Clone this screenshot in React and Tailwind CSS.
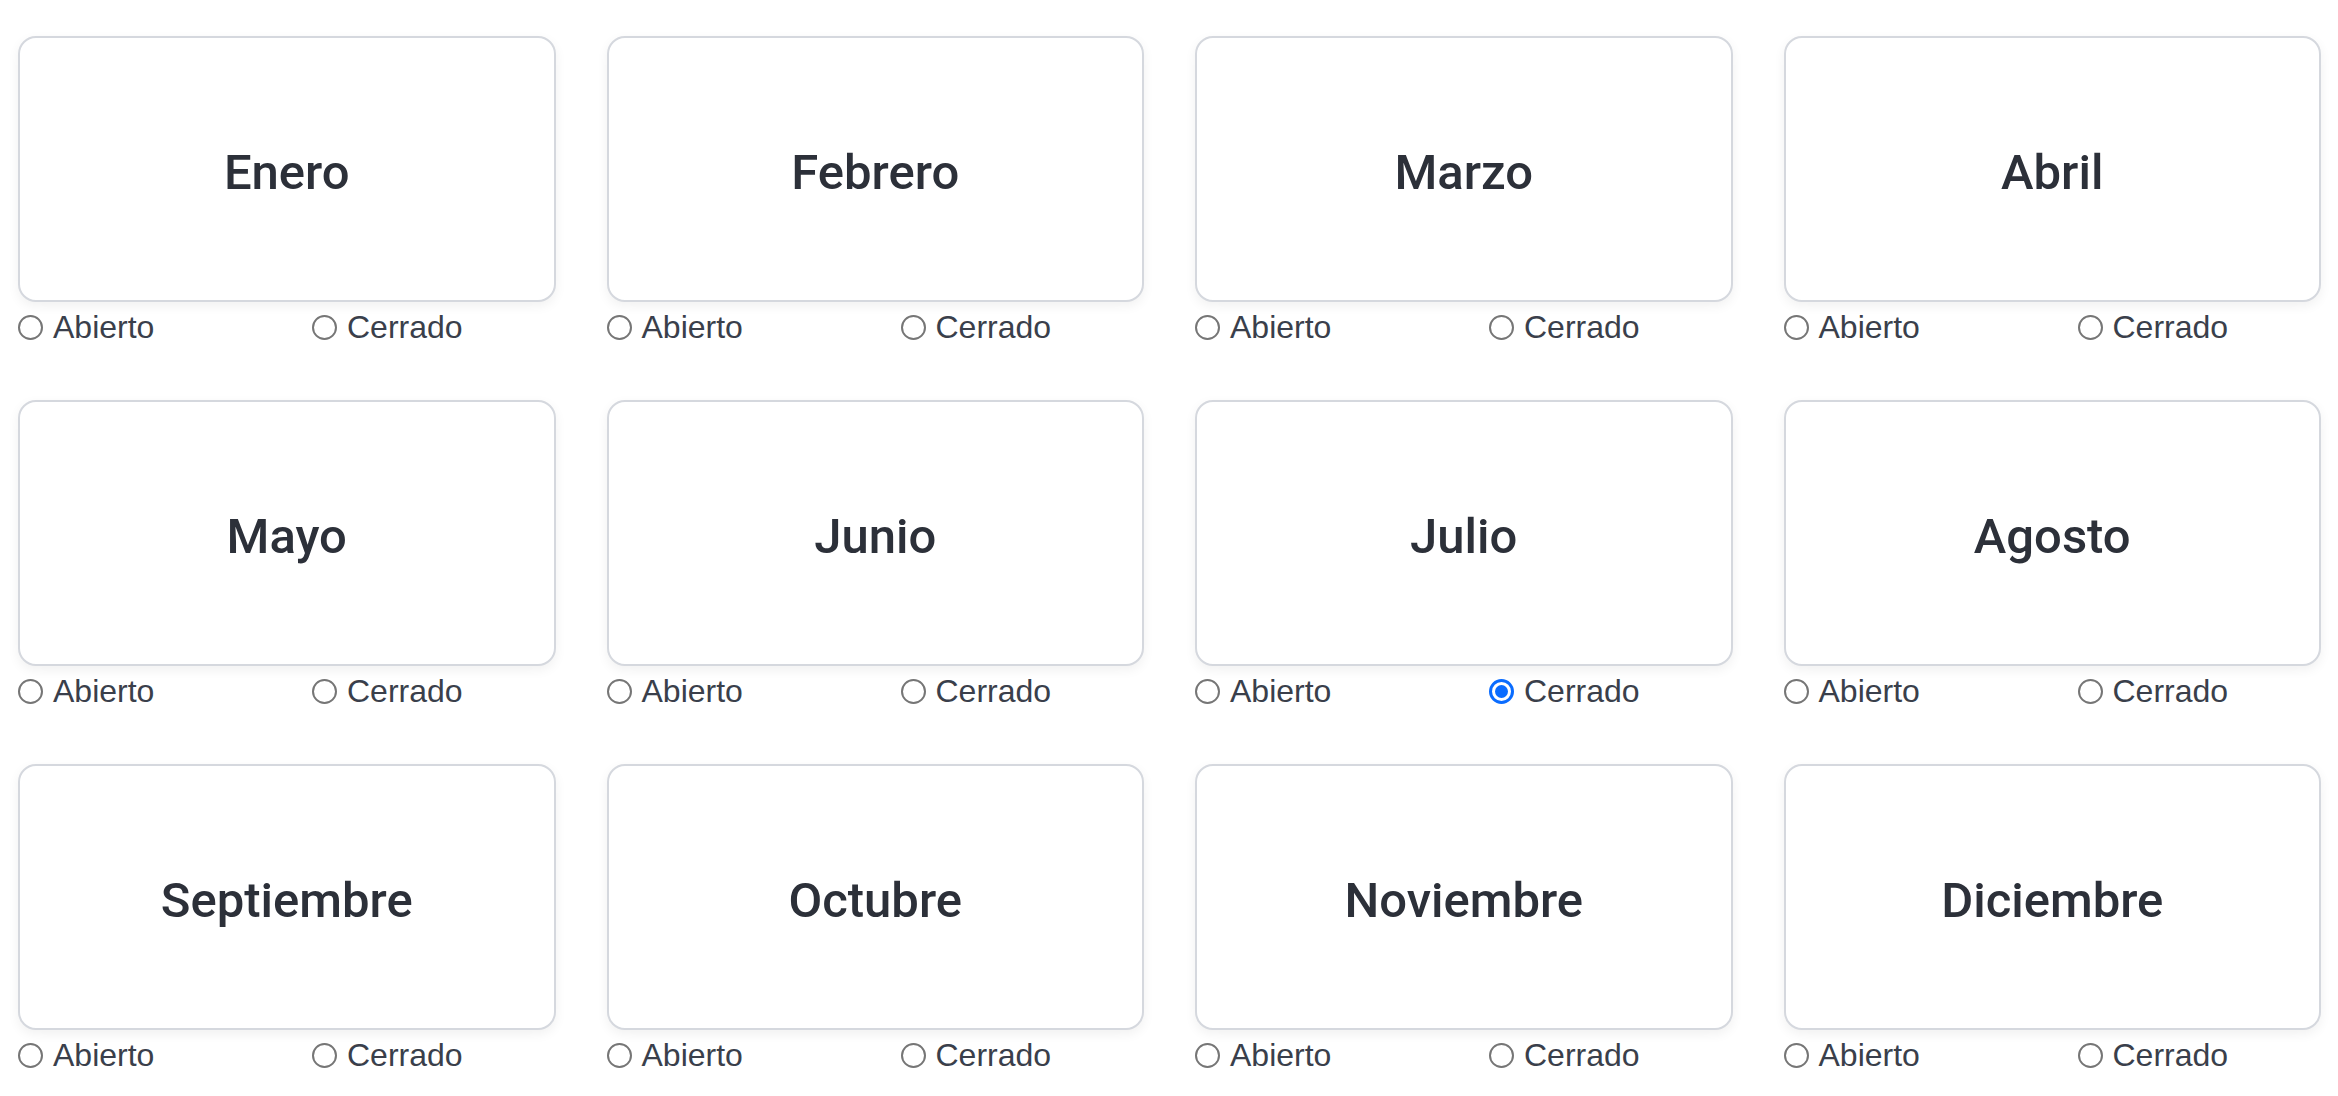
import React, { useState } from 'react';

const MONTHS = [
  'Enero', 'Febrero', 'Marzo', 'Abril',
  'Mayo', 'Junio', 'Julio', 'Agosto',
  'Septiembre', 'Octubre', 'Noviembre', 'Diciembre'
];

const Radio = ({ checked, label, onSelect, className }) => (
  <label onClick={onSelect} className={`flex items-center gap-[10px] cursor-pointer ${className || ''}`}>
    {checked ? (
      <span className="w-[25px] h-[25px] rounded-full border-[3px] border-[#0a6cff] flex items-center justify-center shrink-0">
        <span className="w-[13px] h-[13px] rounded-full bg-[#0a6cff]" />
      </span>
    ) : (
      <span className="w-[25px] h-[25px] rounded-full border-2 border-[#767676] bg-white shrink-0" />
    )}
    <span className="text-[32px] leading-none text-[#3a3f4b]">{label}</span>
  </label>
);

const MonthCard = ({ name, value, onChange }) => (
  <div className="flex flex-col">
    <div className="h-[266px] pt-[6px] rounded-[18px] border-2 border-[#d5d8de] bg-white shadow-[0_4px_12px_rgba(0,0,0,0.06)] flex items-center justify-center">
      <h2 className="text-[49px] font-medium text-[#2c3039] leading-none" style={{ fontFamily: 'Roboto, "Liberation Sans", sans-serif' }}>
        {name}
      </h2>
    </div>
    <div className="h-[48px] pt-[2px] flex items-center">
      <Radio
        className="w-[294px]"
        label="Abierto"
        checked={value === 'abierto'}
        onSelect={() => onChange('abierto')}
      />
      <Radio
        label="Cerrado"
        checked={value === 'cerrado'}
        onSelect={() => onChange('cerrado')}
      />
    </div>
  </div>
);

export default function App() {
  const [status, setStatus] = useState({ Julio: 'cerrado' });

  return (
    <div className="min-h-screen bg-white pt-[36px] pl-[18px] pr-[17px]" style={{ fontFamily: '"Liberation Sans", Arial, sans-serif' }}>
      <div className="grid grid-cols-4 gap-x-[51px] gap-y-[50px]">
        {MONTHS.map((m) => (
          <MonthCard
            key={m}
            name={m}
            value={status[m]}
            onChange={(v) => setStatus({ ...status, [m]: v })}
          />
        ))}
      </div>
    </div>
  );
}
